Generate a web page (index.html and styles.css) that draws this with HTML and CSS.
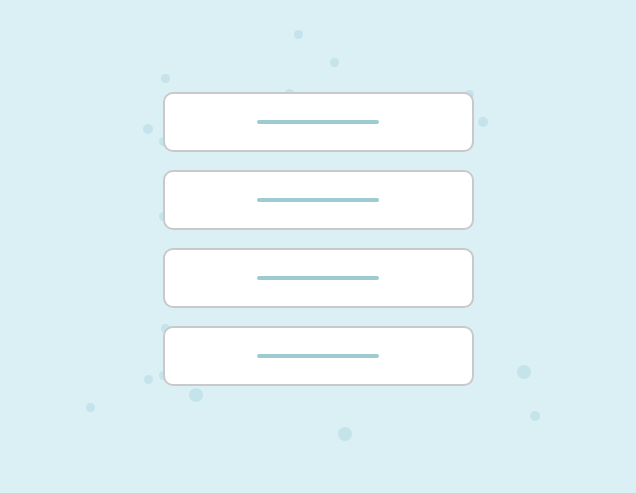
FILE: index.html
```html
<!DOCTYPE html>
<html>
<head>
<meta charset="utf-8">
<link rel="stylesheet" href="styles.css">
</head>
<body>
<div class="scene">
  <div class="dots">
    <span class="dot" style="left:298px;top:34px"></span>
    <span class="dot" style="left:334px;top:62px"></span>
    <span class="dot" style="left:165px;top:78px"></span>
    <span class="dot md" style="left:148px;top:129px"></span>
    <span class="dot md" style="left:483px;top:122px"></span>
    <span class="dot" style="left:289px;top:93px"></span>
    <span class="dot" style="left:469px;top:94px"></span>
    <span class="dot" style="left:163px;top:141px"></span>
    <span class="dot" style="left:163px;top:216px"></span>
    <span class="dot" style="left:165px;top:328px"></span>
    <span class="dot" style="left:163px;top:375px"></span>
    <span class="dot" style="left:148px;top:379px"></span>
    <span class="dot lg" style="left:196px;top:395px"></span>
    <span class="dot" style="left:90px;top:407px"></span>
    <span class="dot lg" style="left:345px;top:434px"></span>
    <span class="dot lg" style="left:524px;top:372px"></span>
    <span class="dot md" style="left:535px;top:416px"></span>
  </div>
  <div class="list">
    <div class="card"><span class="bar"></span></div>
    <div class="card"><span class="bar"></span></div>
    <div class="card"><span class="bar"></span></div>
    <div class="card"><span class="bar"></span></div>
  </div>
</div>
</body>
</html>
```

FILE: styles.css
```css
html, body {
  margin: 0;
  padding: 0;
}
body {
  width: 636px;
  height: 493px;
  overflow: hidden;
  background: #daf0f5;
  font-family: "Liberation Sans", Arial, sans-serif;
}
.scene {
  position: relative;
  width: 636px;
  height: 493px;
}
.dots {
  position: absolute;
  inset: 0;
}
.dot {
  position: absolute;
  width: 9px;
  height: 9px;
  margin: -4.5px 0 0 -4.5px;
  border-radius: 50%;
  background: #c5e3ea;
}
.dot.md {
  width: 10px;
  height: 10px;
  margin: -5px 0 0 -5px;
}
.dot.lg {
  width: 14px;
  height: 14px;
  margin: -7px 0 0 -7px;
}
.list {
  position: relative;
  display: flex;
  flex-direction: column;
  align-items: center;
  gap: 18px;
  padding-top: 92px;
}
.card {
  box-sizing: border-box;
  width: 311px;
  height: 60px;
  background: #ffffff;
  border: 2px solid #c9c9c9;
  border-radius: 10px;
  display: flex;
  align-items: center;
  justify-content: center;
}
.bar {
  display: block;
  width: 122px;
  height: 4px;
  border-radius: 2px;
  background: #9ecbd2;
}
```
